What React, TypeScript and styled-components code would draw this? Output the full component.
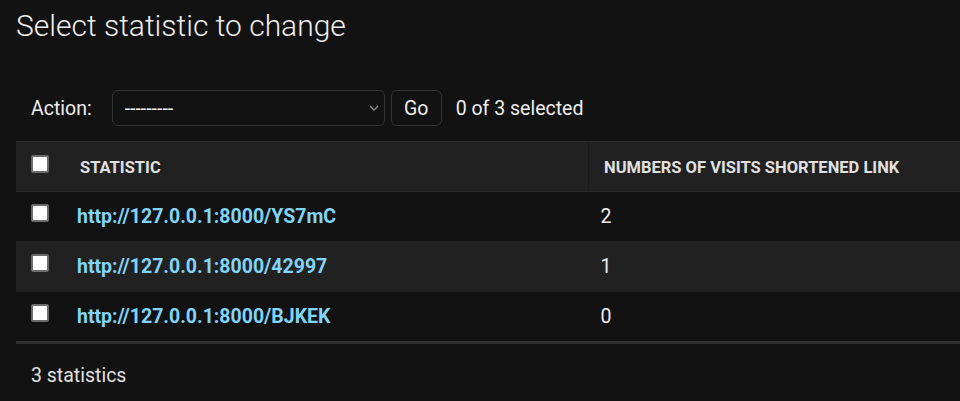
import React from "react";
import styled, { createGlobalStyle } from "styled-components";

const Global = createGlobalStyle`
  html, body { margin: 0; padding: 0; background: #121212; overflow: hidden; }
  body { font-family: Roboto, "Liberation Sans", sans-serif; color: #eeeeee; }
`;

const Page = styled.div`
  padding-left: 16px;
  width: 960px;
  box-sizing: border-box;
`;

const Title = styled.h1`
  margin: 8px 0 31px;
  font-size: 30px;
  line-height: 36px;
  font-weight: 300;
  color: #eeeeee;
`;

const ActionBar = styled.div`
  display: flex;
  align-items: center;
  padding: 15px 15px;
  height: 36px;
  font-size: 19.5px;
`;

const Label = styled.label`
  color: #eeeeee;
  margin-right: 20px;
`;

const SelectBox = styled.div`
  box-sizing: border-box;
  width: 273px;
  height: 36px;
  border: 1px solid #353535;
  border-radius: 6px;
  background: #121212;
  display: flex;
  align-items: center;
  justify-content: space-between;
  padding: 0 5px 0 12px;
  color: #eeeeee;
`;

const GoButton = styled.button`
  box-sizing: border-box;
  margin-left: 6px;
  width: 51px;
  height: 36px;
  border: 1px solid #353535;
  border-radius: 6px;
  background: #121212;
  color: #eeeeee;
  font-family: inherit;
  font-size: 19.5px;
  padding: 0;
`;

const Counter = styled.span`
  margin-left: 14px;
  color: #eeeeee;
`;

const Table = styled.table`
  border-collapse: collapse;
  width: 1000px;
  font-size: 19.5px;
`;

const HeadCell = styled.th<{ $divider?: boolean; $check?: boolean }>`
  background: #212121;
  border-top: 1px solid #2a2a2a;
  border-bottom: 1px solid #2a2a2a;
  border-left: ${(p) => (p.$divider ? "1px solid #1a1a1a" : "none")};
  text-align: left;
  padding: ${(p) => (p.$check ? "13px 0 0 15px" : "14px 15px 11px")};
  vertical-align: ${(p) => (p.$check ? "top" : "middle")};
  width: ${(p) => (p.$check ? "34px" : "auto")};
  font-size: 16.5px;
  line-height: 24px;
  font-weight: 700;
  text-transform: uppercase;
  color: #e0e0e0;
  white-space: nowrap;
`;

const Row = styled.tr<{ $alt?: boolean }>`
  background: ${(p) => (p.$alt ? "#212121" : "#121212")};
`;

const Cell = styled.td<{ $check?: boolean; $last?: boolean }>`
  padding: ${(p) => (p.$check ? "12px 0 0 15px" : "12px 12px")};
  vertical-align: top;
  line-height: 25px;
  border-bottom: 1px solid ${(p) => (p.$last ? "#353535" : "#222222")};
  color: #eeeeee;
`;

const Check = styled.span`
  display: block;
  box-sizing: border-box;
  width: 18px;
  height: 18px;
  background: #ffffff;
  border: 2px solid #6b6b6b;
  border-radius: 2px;
`;

const Link = styled.a`
  color: #81d4fa;
  font-weight: 700;
  text-decoration: none;
`;

const Paginator = styled.div`
  border-top: 2px solid #2e2e2e;
  padding: 15px;
  line-height: 33px;
  font-size: 19.5px;
  color: #e0e0e0;
  width: 1000px;
`;

const rows = [
  { url: "http://127.0.0.1:8000/YS7mC", n: 2 },
  { url: "http://127.0.0.1:8000/42997", n: 1 },
  { url: "http://127.0.0.1:8000/BJKEK", n: 0 },
];

export default function App() {
  return (
    <>
      <Global />
      <Page>
        <Title>Select statistic to change</Title>
        <ActionBar>
          <Label>Action:</Label>
          <SelectBox>
            <span>---------</span>
            <svg width="10" height="6" viewBox="0 0 10 6">
              <path d="M1 1 L5 5 L9 1" fill="none" stroke="#8a8a8a" strokeWidth="1.3" />
            </svg>
          </SelectBox>
          <GoButton>Go</GoButton>
          <Counter>0 of 3 selected</Counter>
        </ActionBar>
        <Table>
          <thead>
            <tr>
              <HeadCell $check>
                <Check />
              </HeadCell>
              <HeadCell style={{ width: 493 }}>Statistic</HeadCell>
              <HeadCell $divider>Numbers of visits shortened link</HeadCell>
            </tr>
          </thead>
          <tbody>
            {rows.map((r, i) => (
              <Row key={r.url} $alt={i % 2 === 1}>
                <Cell $check $last={i === rows.length - 1}>
                  <Check />
                </Cell>
                <Cell $last={i === rows.length - 1}>
                  <Link href="#">{r.url}</Link>
                </Cell>
                <Cell $last={i === rows.length - 1}>{r.n}</Cell>
              </Row>
            ))}
          </tbody>
        </Table>
        <Paginator>3 statistics</Paginator>
      </Page>
    </>
  );
}
